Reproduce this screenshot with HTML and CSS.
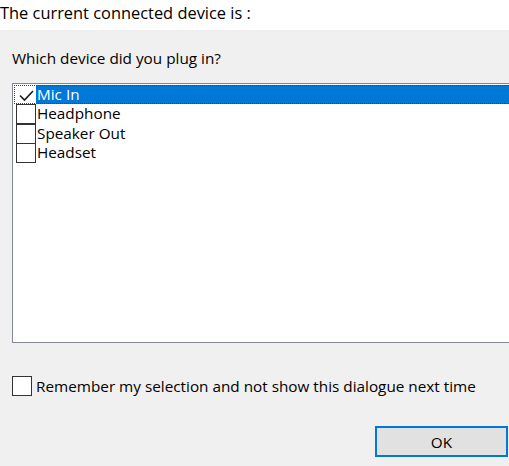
FILE: index.html
```html
<!DOCTYPE html>
<html>
<head>
<meta charset="utf-8">
<link rel="stylesheet" href="styles.css">
</head>
<body>
<div class="header">The current connected device is :</div>
<div class="panel">
  <div class="question">Which device did you plug in?</div>
  <div class="list">
    <div class="row selected">
      <span class="box"><svg width="19" height="19" viewBox="0 0 19 19"><path d="M3 9.5 L7.5 14 L16 5" fill="none" stroke="#1a1a1a" stroke-width="1.6"/></svg></span>
      <span class="label">Mic In</span>
    </div>
    <div class="row"><span class="box"></span><span class="label">Headphone</span></div>
    <div class="row"><span class="box"></span><span class="label">Speaker Out</span></div>
    <div class="row"><span class="box"></span><span class="label">Headset</span></div>
  </div>
  <div class="remember">
    <span class="box big"></span>
    <span class="rlabel">Remember my selection and not show this dialogue next time</span>
  </div>
  <div class="actions">
    <button class="ok">OK</button>
  </div>
</div>
</body>
</html>
```
FILE: styles.css
```css
html, body {
  margin: 0;
  padding: 0;
  width: 509px;
  height: 466px;
  overflow: hidden;
  font-family: "Open Sans", "Noto Sans", sans-serif;
  font-size: 15.3px;
  color: #000;
}
.header {
  background: #fff;
  height: 30px;
  line-height: 25px;
  font-size: 16.4px;
  padding-left: 0;
}
.panel {
  background: #f0f0f0;
  height: 436px;
  padding: 18px 0 0 12px;
  box-sizing: border-box;
}
.question {
  line-height: 20px;
  height: 20px;
}
.list {
  margin-top: 15px;
  width: 510px;
  height: 260px;
  background: #fff;
  border: 1px solid #828790;
  box-sizing: border-box;
  padding: 1px 0 0 1px;
}
.row {
  display: flex;
  align-items: stretch;
  height: 19.4px;
  line-height: 19px;
  box-sizing: border-box;
}
.row .box {
  width: 20px;
  height: 20px;
  box-sizing: border-box;
  border: 1px solid #333;
  margin-left: 2px;
  flex: none;
}
.row .label {
  padding-left: 1px;
}
.row.selected {
  outline: 1px dotted #444;
  outline-offset: -1px;
}
.row.selected .box {
  border-color: #fff;
}
.row.selected .label {
  flex: 1;
  background: #0078d7;
  color: #fff;
}
.remember {
  display: flex;
  align-items: center;
  margin-top: 33px;
  height: 20px;
}
.box.big {
  width: 20px;
  height: 20px;
  border: 1px solid #333;
  background: #fff;
  box-sizing: border-box;
  flex: none;
}
.rlabel {
  padding-left: 4px;
}
.actions {
  display: flex;
  justify-content: flex-end;
  margin-top: 30px;
  padding-right: 1px;
}
.ok {
  width: 133px;
  height: 31px;
  background: #e1e1e1;
  border: 2px solid #0078d7;
  font-family: inherit;
  font-size: 15.3px;
  color: #000;
  padding: 0;
}
```
